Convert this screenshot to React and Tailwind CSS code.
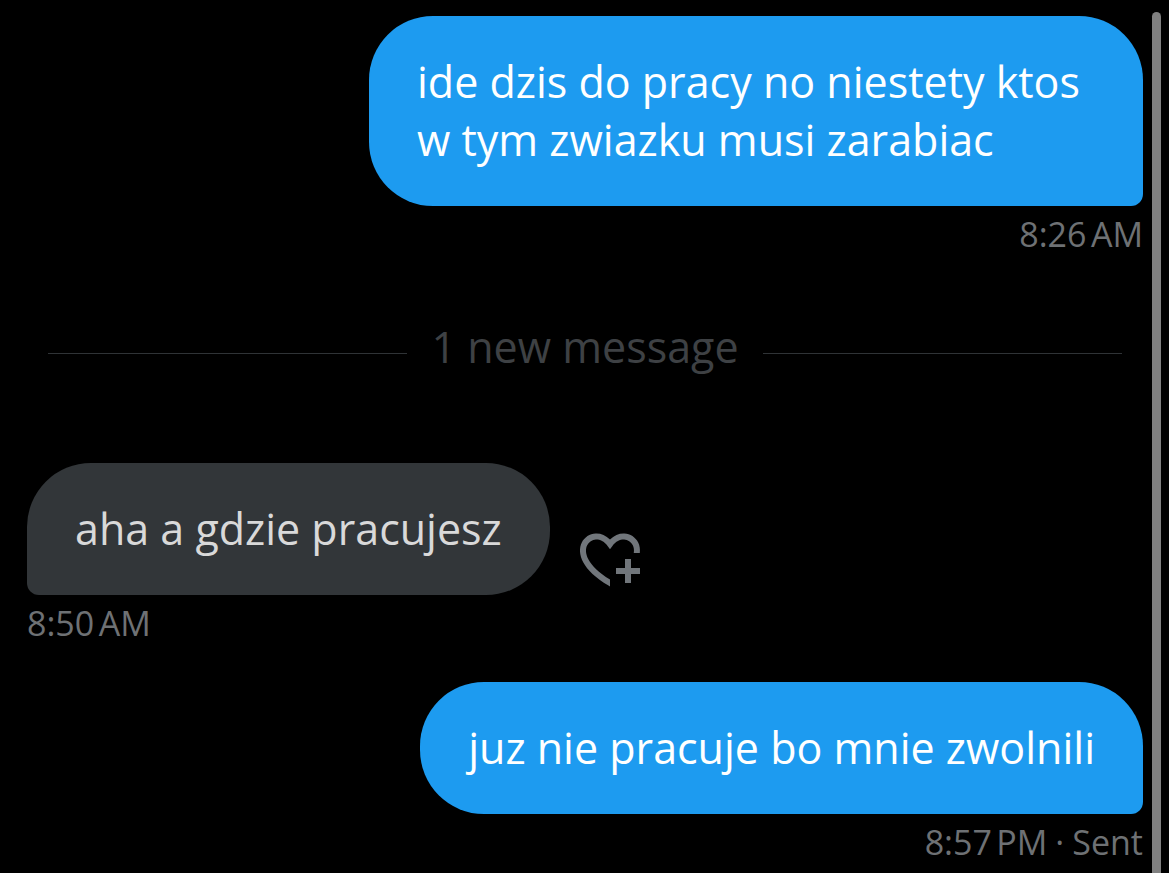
import React from 'react';

const NNBSP = '\u202f';

const messages = [
  {
    id: 1,
    mine: true,
    text: 'ide dzis do pracy no niestety ktos w tym zwiazku musi zarabiac',
    time: `8:26${NNBSP}AM`,
  },
  {
    id: 2,
    mine: false,
    isNew: true,
    text: 'aha a gdzie pracujesz',
    time: `8:50${NNBSP}AM`,
  },
  {
    id: 3,
    mine: true,
    text: 'juz nie pracuje bo mnie zwolnili',
    time: `8:57${NNBSP}PM`,
    status: 'Sent',
  },
];

function ReactionIcon() {
  return (
    <svg viewBox="0 0 24 24" className="size-18" fill="currentColor" aria-hidden="true">
      <path d="M17 12v3h-2.998v2h3v3h2v-3h3v-2h-3.001v-3H17zm-5 6.839c-3.871-2.34-6.053-4.639-7.127-6.609-1.112-2.04-1.031-3.7-.479-4.82.561-1.13 1.667-1.84 2.91-1.91 1.222-.06 2.68.51 3.892 2.16l.806 1.09.805-1.09c1.211-1.65 2.668-2.22 3.89-2.16 1.242.07 2.347.78 2.908 1.91.334.677.49 1.554.321 2.59h2.011c.153-1.283-.039-2.469-.539-3.48-.887-1.79-2.647-2.91-4.601-3.01-1.65-.09-3.367.56-4.796 2.01-1.43-1.45-3.147-2.1-4.798-2.01-1.954.1-3.714 1.22-4.601 3.01-.896 1.81-.846 4.17.514 6.67 1.353 2.48 4.003 5.12 8.382 7.67l.502.299v-2.32z" />
    </svg>
  );
}

function NewMessageDivider({ count }) {
  return (
    <div className="flex items-center px-[21px] mt-[25px] mb-9">
      <div className="flex-1 h-px bg-[#2f3336]" />
      <span className="px-6 pb-3 text-[43px] leading-[58px] text-[#3e4144]">
        {count} new message
      </span>
      <div className="flex-1 h-px bg-[#2f3336]" />
    </div>
  );
}

function Message({ message }) {
  const { mine, text, time, status } = message;

  return (
    <div className={mine ? 'flex flex-col items-end' : 'flex flex-col items-start'}>
      <div className="flex items-end gap-6">
        <p
          className={
            mine
              ? 'max-w-[774px] px-12 py-[37px] rounded-[64px] rounded-br-xl bg-[#1d9bf0] text-white text-[43px] leading-[58px]'
              : 'max-w-[774px] px-12 py-[37px] rounded-[64px] rounded-bl-xl bg-[#323639] text-[#d9d9d9] text-[43px] leading-[58px]'
          }
        >
          {text}
        </p>
        {!mine && (
          <button type="button" aria-label="Add reaction" className="text-[#71767b]">
            <ReactionIcon />
          </button>
        )}
      </div>
      <div className="flex gap-2 mt-2 text-[34px] leading-10 text-[#6e7174]">
        <span>{time}</span>
        {status && (
          <>
            <span>·</span>
            <span>{status}</span>
          </>
        )}
      </div>
    </div>
  );
}

export default function App() {
  return (
    <div
      className="min-h-screen flex bg-black pr-2"
      style={{ fontFamily: '"Open Sans", "Noto Sans", sans-serif' }}
    >
      <main className="flex-1 flex flex-col gap-[39px] pt-4 pl-[27px] pr-[9px]">
        {messages.map((message) => (
          <React.Fragment key={message.id}>
            {message.isNew && <NewMessageDivider count={1} />}
            <Message message={message} />
          </React.Fragment>
        ))}
      </main>

      {/* Scroll thumb */}
      <div className="w-[9px] mt-3 rounded-t-full bg-[#808080]" />
    </div>
  );
}
